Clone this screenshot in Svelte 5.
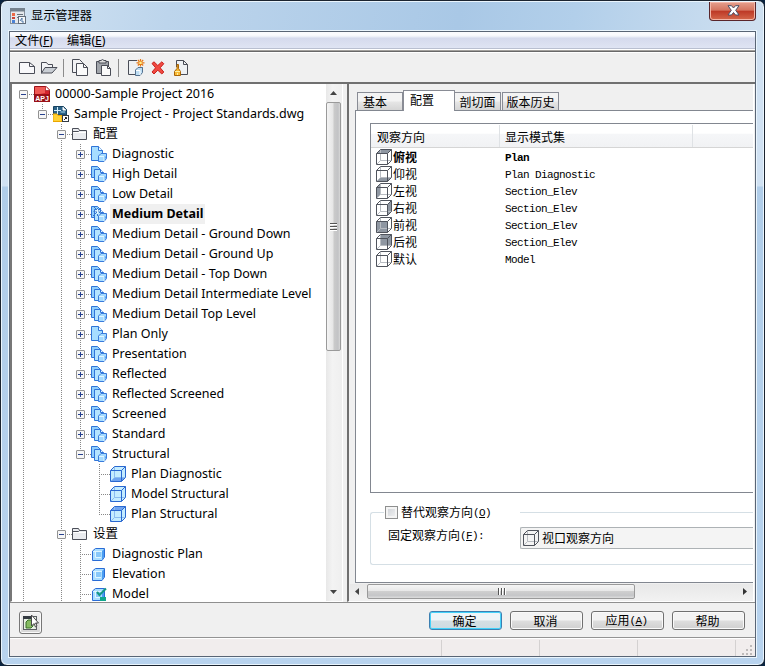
<script>
  const rows = [
    [0, '-', 'apj', '00000-Sample Project 2016', 'b'],
    [1, '-', 'dwg', 'Sample Project - Project Standards.dwg', 't'],
    [2, '-', 'folder', '配置', 'tb'],
    [3, '+', 'conf1', 'Diagnostic', 'tb'],
    [3, '+', 'conf', 'High Detail', 'tb'],
    [3, '+', 'conf', 'Low Detail', 'tb'],
    [3, '+', 'confsel', 'Medium Detail', 'tb'],
    [3, '+', 'conf', 'Medium Detail - Ground Down', 'tb'],
    [3, '+', 'conf', 'Medium Detail - Ground Up', 'tb'],
    [3, '+', 'conf', 'Medium Detail - Top Down', 'tb'],
    [3, '+', 'conf', 'Medium Detail Intermediate Level', 'tb'],
    [3, '+', 'conf', 'Medium Detail Top Level', 'tb'],
    [3, '+', 'conf1', 'Plan Only', 'tb'],
    [3, '+', 'conf', 'Presentation', 'tb'],
    [3, '+', 'conf', 'Reflected', 'tb'],
    [3, '+', 'conf', 'Reflected Screened', 'tb'],
    [3, '+', 'conf', 'Screened', 'tb'],
    [3, '+', 'conf', 'Standard', 'tb'],
    [3, '-', 'conf', 'Structural', 't'],
    [4, '', 'bottom', 'Plan Diagnostic', 'tb'],
    [4, '', 'none', 'Model Structural', 'tb'],
    [4, '', 'top', 'Plan Structural', 't'],
    [2, '-', 'folder', '设置', 'tb'],
    [3, '', 'set', 'Diagnostic Plan', 'tb'],
    [3, '', 'set', 'Elevation', 'tb'],
    [3, '', 'setok', 'Model', 'tb']
  ].map(([level, exp, icon, label, own]) => ({ level, exp, icon, label, own, bold: icon === 'confsel' }));

  const views = [
    ['top', '俯视', 'Plan'],
    ['bottom', '仰视', 'Plan Diagnostic'],
    ['left', '左视', 'Section_Elev'],
    ['right', '右视', 'Section_Elev'],
    ['front', '前视', 'Section_Elev'],
    ['back', '后视', 'Section_Elev'],
    ['none', '默认', 'Model']
  ];

  const faces = {
    top: 'M.5 4.5L4.5.5H15.5L11.5 4.5Z',
    bottom: 'M.5 15.5L4.5 11.5H15.5L11.5 15.5Z',
    left: 'M.5 4.5L4.5.5V11.5L.5 15.5Z',
    right: 'M11.5 4.5L15.5.5V11.5L11.5 15.5Z',
    front: 'M.5 4.5H11.5V15.5H.5Z',
    back: 'M4.5.5H15.5V11.5H4.5Z'
  };

  function cells(r) {
    const out = [];
    for (let i = 0; i < r.level; i++) out.push(i === 0 || i === 2 ? 'tb' : '');
    out.push(r.own);
    return out;
  }
</script>

{#snippet cube(face, blue)}
  <svg class="ico" width="16" height="16" viewBox="0 0 16 16" fill="none">
    {#if blue}<path d="M.5 4.5L4.5.5H15.5V11.5L11.5 15.5H.5Z" fill="#c4ecff" />{/if}
    {#if faces[face]}<path d={faces[face]} fill={blue ? '#6fa4f0' : '#8f97a2'} />{/if}
    <path d="M4.5 1V11.5H15M4.5 11.5L1 15" stroke={blue ? '#8abcf0' : '#b8bcc2'} />
    <path d="M.5 4.5L4.5.5H15.5V11.5L11.5 15.5H.5ZM.5 4.5H11.5V15.5M11.5 4.5L15.5.5" stroke={blue ? '#2a68d0' : '#50545d'} />
  </svg>
{/snippet}

{#snippet miniCube()}
  <path d="M7.5 10L10 7.500H15.5V12.500L13 15.500H7.5Z" fill="#a5dbff" stroke="#3a7bdc" />
  <path d="M13 10.500H15V12L13 14.500Z" fill="#5fa8f0" />
  <path d="M8 10.500H13V15" stroke="#e2f7ff" />
{/snippet}

{#snippet icon(name)}
  {#if name in faces || name === 'none'}
    {@render cube(name, true)}
  {:else}
    <svg class="ico" width="16" height="16" viewBox="0 0 16 16" fill="none">
      {#if name === 'apj'}
        <path d="M.5.5H12L15.5 4V15.5H.5Z" fill="#d3232c" stroke="#9c1018" />
        <path d="M1 1H11V7L1 9Z" fill="#ef5a55" /><path d="M11.5 0V4.5H16Z" fill="#fff" stroke="#a61a20" stroke-width=".7" />
        <rect y="8" width="16" height="8" fill="#991017" />
        <text x="8" y="14.8" text-anchor="middle" font-family="Liberation Sans" font-size="7" font-weight="700" fill="#fff">APJ</text>
      {:else if name === 'dwg'}
        <path d="M.5.5H10.5L13.5 3.5V9H.5Z" fill="#2c6388" stroke="#174260" />
        <path d="M10 1V4H13" fill="#fff" stroke="#fff" /><path d="M4.5 1V8M1 4.5H8" stroke="#d5f2ff" /><path d="M7.5 6H12" stroke="#a9d9ef" />
        <path d="M0 8H4L5 9.500H9V15.500H0Z" fill="#ffd236" stroke="#eaa600" />
        <rect x="9.500" y="9.500" width="6" height="6" fill="#fff" stroke="#333b45" />
        <path d="M11 14L13.500 11.500M12 11.500H13.500V13" stroke="#222" />
      {:else if name === 'folder'}
        <path d="M.5 13.500V2.500H6.500L7.500 4.500H14.500V13.500Z" fill="#e9ebef" stroke="#4b4e58" />
        <path d="M1 5.500H6.500L7.500 4.500" stroke="#4b4e58" /><path d="M1.500 6.500H14" stroke="#fff" />
      {:else if name === 'conf1'}
        <path d="M.5.5H7.500L11.500 4.500V14.500H.5Z" fill="#a6ddff" stroke="#2f74d8" />
        <path d="M7.500.5V4.500H11.500" fill="#eefaff" stroke="#2f74d8" />
        {@render miniCube()}
      {:else if name === 'conf' || name === 'confsel'}
        <path d="M.5.5H6.500L9.500 3.500V11.500H.5Z" fill="#8fcefd" stroke="#2f74d8" />
        <path d="M3.500 3.500H9.500L12.500 6.500V14.500H3.500Z" fill="#b4e4ff" stroke="#2f74d8" />
        <path d="M9.500 3.500V6.500H12.500" fill="#eefaff" stroke="#2f74d8" />
        {#if name === 'confsel'}
          <path d="M3 1L11 9M10 2L2 10M6.500 2V10M2.500 5.500H10" stroke="#3878c8" />
          <path d="M4 5H9M6.500 3V8" stroke="#e5f7ff" />
        {/if}
        {@render miniCube()}
      {:else}
        <path d="M1.500 5L4.500 2.500H13.500V11L11 14.500H1.500Z" fill="#a9ddff" stroke="#2a6cd6" />
        <path d="M11 5L13 3V11L11 14Z" fill="#4b9df2" /><path d="M2 5.500H11M4.500 5V11.500H10" stroke="#dff6ff" /><rect x="5" y="6" width="5" height="5" fill="#88c8fa" />
        {#if name === 'setok'}
          <path d="M6 6L8.500 9L15 2.500" stroke="#159884" stroke-width="2" /><rect x="9" y="11" width="6" height="5" fill="#11a78c" />
        {/if}
      {/if}
    </svg>
  {/if}
{/snippet}

<div class="window">
  <header class="title">
    <svg width="16" height="16" viewBox="0 0 16 16">
      <rect x=".5" y=".5" width="14" height="15" fill="#e4e8ec" stroke="#87919d" /><rect width="15" height="3.500" fill="#75828e" />
      <rect x="2" y="5" width="3" height="3" fill="#ec6a45" /><rect x="2" y="9" width="3" height="2" fill="#cc4336" /><rect x="2" y="12" width="3" height="3" fill="#4a82d6" />
      <path d="M7 6.500H13M7 9.500H13" stroke="#66717d" /><rect x="8.500" y="8.500" width="7" height="7" fill="#f3f6f9" stroke="#626d7a" /><path d="M10 13L12 10V14H14" fill="none" stroke="#4e79a8" />
    </svg>
    <span class="caption">显示管理器</span>
    <div class="close">
      <svg width="13" height="11" viewBox="0 0 13 11"><path d="M1 .7H4.500L6.500 3L8.500.7H12L8.700 5.300L12 10H8.500L6.500 7.500L4.500 10H1L4.300 5.300Z" fill="#fff" stroke="#4b4f66" /></svg>
    </div>
  </header>

  <div class="client">
    <nav class="menu"><span>文件(<u>F</u>)</span><span>编辑(<u>E</u>)</span></nav>
    <div class="toolbar">
      <svg width="18" height="18" viewBox="0 0 18 18"><path d="M2.500 3.500H12.500L17.500 7.500V14.500H2.500Z" fill="#f8f8fa" stroke="#4a4d57" /><path d="M12.500 3.500V7.500H17.500" fill="none" stroke="#4a4d57" /></svg>
      <svg class="open" width="18" height="18" viewBox="0 0 18 18"><path d="M1.500 14.500V3.500H6.500L8 5.500H12.500V8" fill="#f3f4f6" stroke="#4a4d57" /><path d="M1.500 14L5 8.500H17L12 14Z" fill="#c9ced4" stroke="#4a4d57" /></svg>
      <i class="sep"></i>
      <svg class="copy" width="18" height="18" viewBox="0 0 18 18"><path d="M1.500.5H8.500L11.500 3.500V13.500H1.500Z" fill="#f2f2f4" stroke="#4a4d57" /><path d="M5.500 4.500H12.500L16.500 8.500V16.500H5.500Z" fill="#fafafa" stroke="#4a4d57" /><path d="M12.500 4.500V8.500H16.500" fill="none" stroke="#4a4d57" /></svg>
      <svg class="paste" width="18" height="18" viewBox="0 0 18 18"><path d="M1.500 2.500H13.500V14.500H1.500Z" fill="#a0a4aa" stroke="#4a4d57" /><path d="M4 4V1.500H6L7.500.5L9 1.500H11V4Z" fill="#ddd" stroke="#4a4d57" /><path d="M6.500 6.500H12.500L15.500 9.500V16.500H6.500Z" fill="#fafafa" stroke="#4a4d57" /><path d="M12.500 6.500V9.500H15.500" fill="none" stroke="#4a4d57" /></svg>
      <i class="sep two"></i>
      <svg class="new" width="18" height="18" viewBox="0 0 18 18"><path d="M1 1H11V16H1Z" fill="#eef1f4" /><path d="M10 1.500H1.500V15.500H8M15 10V8" fill="none" stroke="#4a4d57" /><path d="M8.500 11L11 8.500H15.500V13.500L13 16.500H8.500Z" fill="#bddcf2" stroke="#54718f" /><path d="M9 11.500H13V16" fill="none" stroke="#fff" /><path d="M13.500 0V7.500M9.500 3.800H17.500M10.800 1L16.200 6.500M16.200 1L10.800 6.500" stroke="#e67817" stroke-width="1.200" /><rect x="12.300" y="2.600" width="2.400" height="2.400" fill="#fff28b" /></svg>
      <svg class="del" width="14" height="14" viewBox="0 0 14 14"><path d="M1 2.500L3 .8L6.800 4.500L10.800.8L12.800 2.700L9.200 6.800L12.800 11L10.800 13L6.800 9.200L3 13L1 11L4.600 6.800Z" fill="#f04a41" stroke="#c9201d" /></svg>
      <svg class="purge" width="18" height="18" viewBox="0 0 18 18"><path d="M3.500 8V1.500H10.500L14.500 5.500V15.500H8" fill="#eef1f4" stroke="#4a4d57" /><path d="M10.500 1.500V5.500H14.500" fill="none" stroke="#4a4d57" /><path d="M4 5.500H5.500V9.500L7.500 12.500V16.500H1.500V12.500L4 9.500Z" fill="#f7b733" stroke="#a96406" /><path d="M2 12.500H7M4.500 14V16" stroke="#fff0a2" /></svg>
    </div>

    <main class="panes">
      <section class="tree">
        <div class="rows">
          {#each rows as r}
            <div class="row">
              {#each cells(r) as c, i}
                <span class="cell" class:t={c.includes('t')} class:b={c.includes('b')} class:own={i === r.level}>
                  {#if i === r.level && r.exp}
                    <svg class="exp" width="9" height="9" viewBox="0 0 9 9"><rect x=".5" y=".5" width="8" height="8" rx=".5" fill="#f6f6f6" stroke="#929292" /><path d={r.exp === '+' ? 'M2 4.500H7M4.500 2V7' : 'M2 4.500H7'} stroke="#27418f" /></svg>
                  {/if}
                </span>
              {/each}
              {@render icon(r.icon)}
              <span class="label" class:bold={r.bold}>{r.label}</span>
            </div>
          {/each}
        </div>
        <div class="vscroll">
          <svg width="15" height="18" viewBox="0 0 15 18"><path d="M4 11L7.500 7L11 11Z" fill="#444" /></svg>
          <div class="vthumb"><i></i><i></i><i></i></div>
          <svg class="down" width="15" height="18" viewBox="0 0 15 18"><path d="M4 7L7.500 11L11 7Z" fill="#444" /></svg>
        </div>
      </section>

      <section class="detail">
        <div class="tabs">
          <span class="tab t1">基本</span><span class="tab active">配置</span><span class="tab t3">剖切面</span><span class="tab t4">版本历史</span>
        </div>
        <div class="page">
          <div class="list">
            <div class="head"><span class="c1">观察方向</span><span class="c2">显示模式集</span></div>
            {#each views as [face, name, set], i}
              <div class="view" class:bold={i === 0}>
                {@render cube(face, false)}<span class="vn">{name}</span><span class="vs">{set}</span>
              </div>
            {/each}
          </div>
          <div class="group">
            <div class="legend"><i class="corner"></i><span class="check"></span><span class="lt">替代观察方向<span class="m">(<u>O</u>)</span></span><i class="line"></i></div>
            <div class="gbody">
              <span class="fl">固定观察方向<span class="m">(<u>F</u>):</span></span>
              <div class="combo">{@render cube('none', false)}<span>视口观察方向</span></div>
            </div>
          </div>
        </div>
        <div class="hscroll">
          <svg width="17" height="15" viewBox="0 0 17 15"><path d="M9 4L5 7.500L9 11Z" fill="#444" /></svg>
          <div class="hthumb"><i></i><i></i><i></i></div>
          <svg class="rt" width="17" height="15" viewBox="0 0 17 15"><path d="M6 4L10 7.500L6 11Z" fill="#333" /></svg>
        </div>
      </section>
    </main>

    <footer class="actions">
      <div class="opt">
        <svg width="17" height="17" viewBox="0 0 17 17"><rect x="1.500" y="2.500" width="13" height="13" fill="#e7f0e3" stroke="#5a5d63" /><path d="M1 3.500H11" stroke="#333a41" stroke-width="3" /><path d="M4 8L6 6H11V12L9 14H4Z" fill="#85bb62" stroke="#396f29" /><path d="M9.500 1V12L12 9.500L13.500 13L15 12L13.500 9H16.500Z" fill="#fff" stroke="#4a4a4a" /></svg>
      </div>
      <button class="ok">确定</button><button>取消</button><button>应用<span class="m">(<u>A</u>)</span></button><button>帮助</button>
    </footer>
    <div class="status">
      <i></i><i></i><i></i><i></i>
      <svg width="12" height="12" viewBox="0 0 12 12"><path d="M9 1h2v2H9zM5 5h2v2H5zM9 5h2v2H9zM1 9h2v2H1zM5 9h2v2H5zM9 9h2v2H9z" fill="#bdbaba" /></svg>
    </div>
  </div>
</div>

<style>
  :global(body) { margin: 0; background: #0a2440; overflow: hidden; }
  .window, .window * { box-sizing: border-box; }
  .window {
    width: 765px; height: 666px; padding: 1px 8px 8px 8px; display: flex; flex-direction: column;
    border: 1px solid #1b2430; border-radius: 7px; box-shadow: inset 0 0 0 1px #eaf5fd;
    background: linear-gradient(100deg, #d3e4f3 0, #bdd5ec 22%, #a9c8e6 60%, #b2cfea 75%, #cfe0f0 100%) 0 0 / 100% 30px no-repeat,
      linear-gradient(#d0e1f2 0 185px, #b0cde9 186px, #b8d3ee 100%);
    font: 12px/16px "Liberation Sans", "Noto Sans CJK SC", sans-serif; color: #000;
  }
  svg { display: block; flex: none; }
  .title { height: 29px; flex: none; display: flex; align-items: flex-start; padding: 6px 0 0 1px; }
  .caption { font: 12.2px/17px "Noto Sans CJK SC", sans-serif; margin: -1px 0 0 5px; }
  .close {
    margin: -6px 0 0 auto; width: 47px; height: 19px; display: flex; align-items: center; justify-content: center; padding: 0 0 2px 1px;
    border: 1px solid #59252a; border-top: 0; border-radius: 0 0 4px 4px; box-shadow: inset 0 0 0 1px #f3b7a9;
    background: linear-gradient(#e5a08e 0, #d4745f 46%, #bd3825 50%, #d4684b 100%);
  }
  .client { width: 747px; height: 626px; flex: none; border: 1px solid #596575; outline: 1px solid #eaf5fd; background: #f0f0f0; display: flex; flex-direction: column; overflow: hidden; }
  .menu { height: 18px; flex: none; display: flex; gap: 14px; padding-left: 5px; background: linear-gradient(#fafbfe 0 3px, #e9edf7 5px, #d5daed 6px, #dfe4f3 16px, #b9bfd0 16px 17px, #fff 17px); font: 12.2px/17px "Noto Sans", "Noto Sans CJK SC", sans-serif; }
  u { text-decoration: underline; text-underline-offset: 1px; }
  .toolbar { height: 34px; flex: none; display: flex; align-items: center; padding: 4px 0 0 7px; border-bottom: 2px solid #707070; background: linear-gradient(#a3a19e 0 1px, #696969 1px 2px, #fff 2px 3px, #f0f0f0 3px); }
  .open { margin-left: 5px; }
  .sep { width: 1px; height: 18px; background: #8b8b8b; margin: 0 7px 0 5px; }
  .sep.two { margin: 0 8px 0 5px; }
  .paste { margin-left: 6px; }
  .del { margin: 0 8px 0 6px; }
  .panes { height: 518px; flex: none; display: flex; }
  .tree { width: 333px; flex: none; background: #fff; border-left: 2px solid #777; border-right: 1px solid #fff; border-bottom: 1px solid #fff; display: flex; overflow: hidden; }
  .rows { width: 314px; flex: none; overflow: hidden; }
  .row { height: 20px; display: flex; align-items: center; padding-left: 2px; white-space: nowrap; }
  .cell { width: 19px; height: 20px; flex: none; display: grid; grid-template: 10px 10px / 9px 10px; background-repeat: no-repeat; --dots: repeating-linear-gradient(#888 0 1px, transparent 1px 2px); }
  .cell.t { background-image: var(--dots); background-position: 9px 0; background-size: 1px 10px; }
  .cell.b { background-image: var(--dots); background-position: 9px 10px; background-size: 1px 10px; }
  .cell.t.b { background-position: 9px 0; background-size: 1px 20px; }
  .cell.own::after { content: ""; grid-area: 2 / 2; height: 1px; width: 11px; background: repeating-linear-gradient(90deg, #888 0 1px, transparent 1px 2px); }
  .exp { grid-area: 1 / 1 / 3 / 3; margin: 6px 0 0 5px; z-index: 1; }
  .row > :global(svg) { margin: 0 3px 0 1px; z-index: 1; }
  .label { font: 12.5px/20px "Noto Sans", "Noto Sans CJK SC", sans-serif; padding: 0 2px; height: 20px; margin-top: -1px; }
  .label.bold { font-weight: 700; background: #f0f0f0; }
  .vscroll { width: 16px; flex: none; background: linear-gradient(90deg, #e8e8e8, #f3f3f3 40%, #efefef); display: flex; flex-direction: column; }
  .vthumb { height: 249px; flex: none; border: 1px solid #9a9a9a; border-radius: 2px; background: linear-gradient(90deg, #f4f4f4, #e6e6e6 45%, #cacaca 55%, #c2c3c5 85%, #d8d8d8); display: flex; flex-direction: column; align-items: center; justify-content: center; gap: 2px; width: 15px; }
  .vthumb i { width: 7px; height: 1px; background: #555; box-shadow: 0 1px #fff; }
  .down { margin-top: auto; }
  .detail { width: 407px; flex: none; margin-left: 4px; border-left: 2px solid #707070; display: flex; flex-direction: column; overflow: hidden; background: #f0f0f0; border-right: 1px solid #fff; border-bottom: 1px solid #fff; }
  .tabs { height: 26px; flex: none; display: flex; align-items: flex-end; padding-left: 8px; }
  .tab { height: 18px; border: 1px solid #898c95; border-bottom: 0; background: linear-gradient(#f3f3f3 0 48%, #e6e6e6 52%, #d5d5d5); text-align: center; font: 12px/18px "Noto Sans CJK SC", sans-serif; flex: none; white-space: nowrap; }
  .t1 { width: 46px; text-align: left; padding-left: 5px; }
  .active { width: 52px; height: 21px; background: #fff; margin: 0 0 -1px; z-index: 1; line-height: 18px; text-align: left; padding-left: 6px; position: relative; }
  .t3 { width: 46px; border-left: 0; margin: 0 1px 0 0; }
  .t4 { width: 57px; }
  .page { height: 473px; flex: none; margin-left: 6px; width: 399px; background: #fff; border: solid #828790; border-width: 1px 0 1px 1px; padding: 12px 0 0 14px; overflow: hidden; }
  .list { height: 370px; border: solid #828790; border-width: 1px 0 1px 1px; }
  .head { height: 24px; margin-bottom: 1px; padding: 1px 0 0 1px; display: flex; border-bottom: 1px solid #d5d5d5; background: linear-gradient(#fff 0 40%, #f5f6f8 45%, #f1f2f4); font: 12px/24px "Noto Sans CJK SC", sans-serif; }
  .c1 { width: 128px; padding-left: 5px; border-right: 1px solid #dfe2e5; }
  .c2 { width: 193px; padding-left: 5px; border-right: 1px solid #dfe2e5; }
  .view { height: 17px; display: flex; align-items: flex-start; padding-left: 5px; font: 12px/16px "Noto Sans CJK SC", sans-serif; }
  .vn { width: 112px; padding-left: 1px; }
  .vs, .m { font-family: "Liberation Mono", monospace; font-size: 11px; letter-spacing: -.6px; }
  .vs { padding: 1px 0 0 1px; }
  .m { position: relative; top: -1px; }
  .view.bold { font-weight: 700; }
  .group { height: 59px; margin-top: 13px; display: flex; flex-direction: column; }
  .legend { height: 13px; display: flex; align-items: center; }
  .corner { width: 14px; height: 7px; align-self: flex-end; border: solid #d5dfe5; border-width: 1px 0 0 1px; border-radius: 3px 0 0; }
  .line { flex: 1; height: 1px; background: #d5dfe5; }
  .check { width: 13px; height: 13px; margin-left: 1px; border: 1px solid #8e8f8f; box-shadow: inset 0 0 0 2px #f4f4f4; background: linear-gradient(135deg, #cbcfd5, #f5f5f5); }
  .lt { width: 122px; padding-left: 3px; white-space: nowrap; }
  .lt, .fl, .combo { font: 12px/16px "Noto Sans CJK SC", sans-serif; }
  .gbody { height: 46px; border: solid #d5dfe5; border-width: 0 0 1px 1px; border-radius: 0 0 0 3px; display: flex; align-items: flex-start; padding: 8px 0 0 17px; }
  .fl { width: 132px; flex: none; white-space: nowrap; }
  .combo { flex: 1; height: 22px; border: 1px solid #adb2b5; border-right: 0; border-radius: 2px 0 0 2px; background: #f4f4f4; display: flex; align-items: center; gap: 3px; padding-left: 2px; }
  .hscroll { height: 16px; flex: none; margin: 1px 0 0 1px; display: flex; width: 404px; background: linear-gradient(#e8e8e8, #f1f1f1); }
  .hthumb { width: 268px; height: 15px; border: 1px solid #9a9a9a; border-radius: 2px; background: linear-gradient(#f5f5f5, #e8e8e8 45%, #cfcfcf 50%, #c5c6c8 80%, #ddd); display: flex; align-items: center; justify-content: center; gap: 2px; }
  .hthumb i { width: 1px; height: 7px; background: #555; box-shadow: 1px 0 #fff; }
  .rt { margin-left: auto; }
  .actions { height: 36px; flex: none; border-top: 1px solid #8f8f8f; border-bottom: 1px solid #939393; display: flex; align-items: flex-start; padding: 8px 0 0 9px; gap: 8px; }
  .opt { width: 23px; height: 23px; margin-right: 379px; border: 1px solid #777; border-radius: 3px; background: linear-gradient(#f3f3f3, #d6d6d6); box-shadow: inset 0 0 0 1px #fafafa; display: grid; place-items: center; }
  button { width: 73px; height: 19px; flex: none; padding: 0 2px 1px 0; border: 1px solid #707070; border-radius: 3px; background: linear-gradient(#f3f3f3 0 48%, #dedede 52%, #cfcfcf); box-shadow: inset 0 0 0 1px #fafafa; font: 12px/15px "Noto Sans CJK SC", sans-serif; color: #000; }
  .ok { border-color: #3c7fb1; box-shadow: inset 0 0 0 1px #43d2fa; background: linear-gradient(#eef5f8 0 48%, #d5dfe4 52%, #cddbe2); }
  .status { flex: 1; background: #f1eded; border-top: 1px solid #fff; display: flex; padding: 1px 0 0 431px; align-items: flex-start; }
  .status i { width: 1px; height: 16px; background: #d4d1d1; margin-right: 97px; flex: none; }
  .status i:last-of-type { margin-right: 5px; }
  .status svg { margin-top: 4px; }
</style>
